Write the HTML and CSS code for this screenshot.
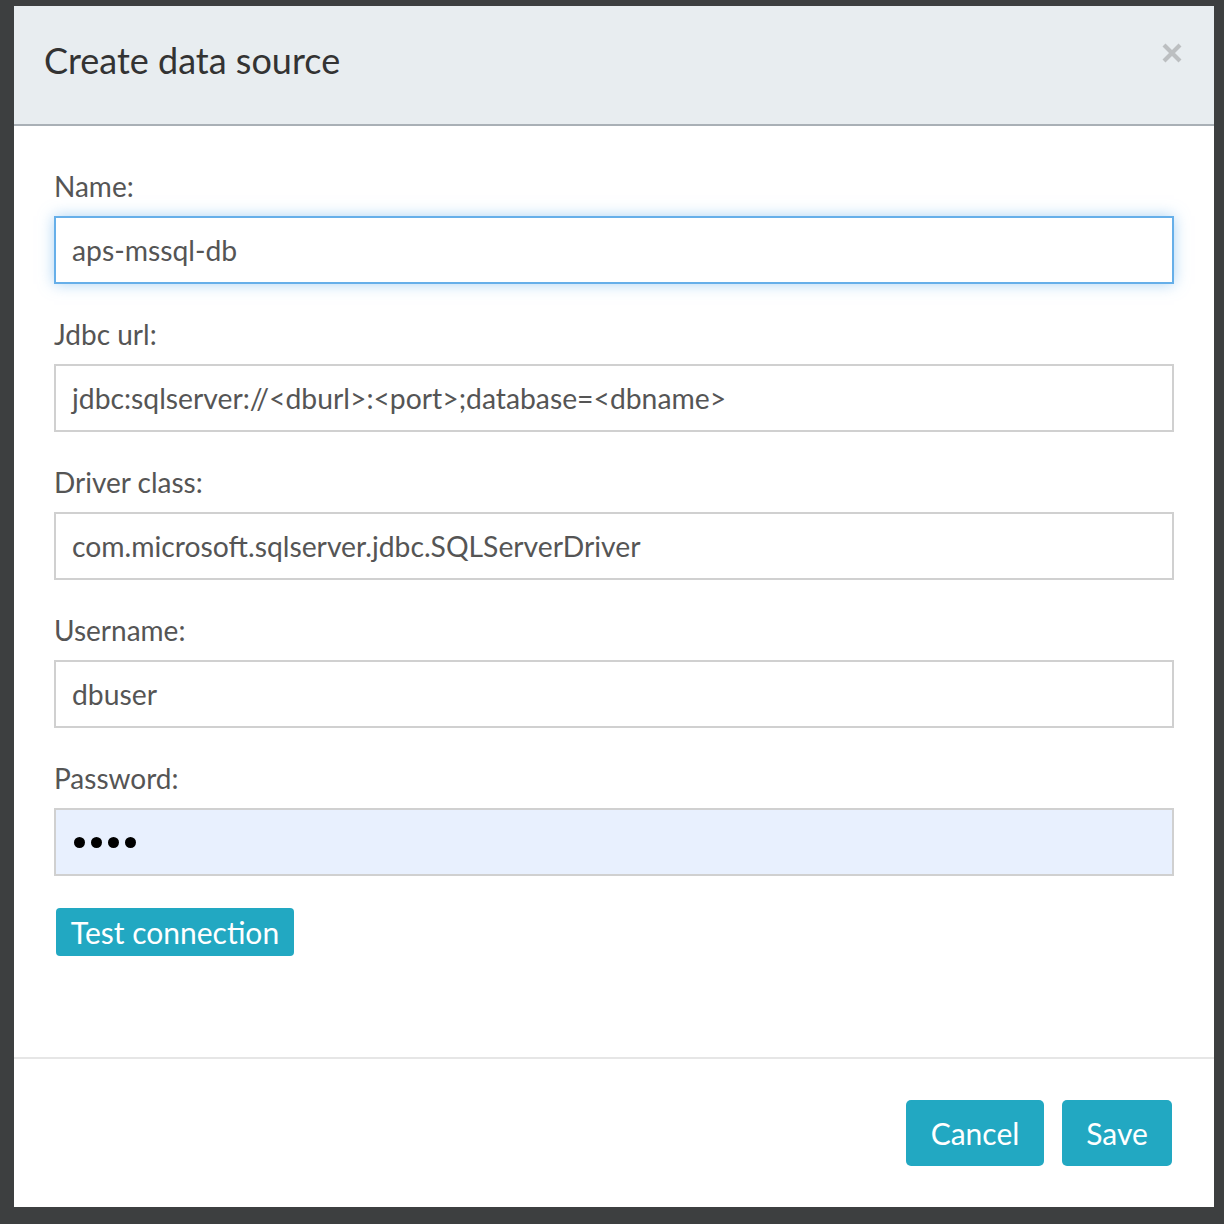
FILE: index.html
```html
<!DOCTYPE html>
<html>
<head>
<meta charset="utf-8">
<link rel="stylesheet" href="styles.css">
</head>
<body>
<div class="modal">
  <div class="modal-header">
    <h4 class="title">Create data source</h4>
    <button class="close" aria-label="Close">
      <svg width="22" height="22" viewBox="0 0 22 22"><path d="M3 3 L19 19 M19 3 L3 19" stroke="#bcbfc1" stroke-width="4.2" stroke-linecap="butt"/></svg>
    </button>
  </div>
  <div class="modal-body">
    <div class="group">
      <label class="label">Name:</label>
      <div class="input focused">aps-mssql-db</div>
    </div>
    <div class="group">
      <label class="label">Jdbc url:</label>
      <div class="input">jdbc:sqlserver://&lt;dburl&gt;:&lt;port&gt;;database=&lt;dbname&gt;</div>
    </div>
    <div class="group">
      <label class="label">Driver class:</label>
      <div class="input">com.microsoft.sqlserver.jdbc.SQLServerDriver</div>
    </div>
    <div class="group">
      <label class="label">Username:</label>
      <div class="input">dbuser</div>
    </div>
    <div class="group">
      <label class="label">Password:</label>
      <div class="input password"><span class="dots"><i></i><i></i><i></i><i></i></span></div>
    </div>
    <button class="btn btn-small">Test connection</button>
  </div>
  <div class="modal-footer">
    <button class="btn btn-large cancel">Cancel</button>
    <button class="btn btn-large save">Save</button>
  </div>
</div>
</body>
</html>
```

FILE: styles.css
```css
html, body {
  margin: 0;
  padding: 0;
}
body {
  background: #3d3f40;
  width: 1224px;
  height: 1224px;
  overflow: hidden;
  font-family: Lato, "Open Sans", sans-serif;
}
.modal {
  margin: 6px 0 0 14px;
  width: 1200px;
  height: 1201px;
  background: #fff;
  display: flex;
  flex-direction: column;
}
.modal-header {
  height: 118px;
  background: #e8edf0;
  border-bottom: 2px solid #a9b0b6;
  display: flex;
  align-items: center;
  justify-content: space-between;
  padding: 0 31px 0 31px;
  box-sizing: content-box;
}
.title {
  margin: 0 0 0 -1px;
  font-size: 36px;
  font-weight: 400;
  color: #333;
  line-height: 1;
  padding-bottom: 10px;
}
.close {
  background: none;
  border: 0;
  padding: 0;
  margin-top: -24px;
  display: flex;
}
.modal-body {
  flex: 1;
  padding: 42px 40px 0 40px;
}
.group {
  margin-bottom: 32px;
}
.label {
  display: block;
  font-size: 28px;
  line-height: 36px;
  color: #555;
  margin-bottom: 12px;
}
.input {
  box-sizing: border-box;
  height: 68px;
  border: 2px solid #d0d0d0;
  padding: 0 16px;
  display: flex;
  align-items: center;
  font-size: 28.3px;
  color: #555;
  background: #fff;
}
.input.focused {
  border-color: #66afe9;
  box-shadow: 0 0 14px rgba(102, 175, 233, 0.55);
}
.input.password {
  background: #e8f0fe;
}
.dots {
  display: flex;
  gap: 6px;
  padding-left: 2px;
}
.dots i {
  display: block;
  width: 11px;
  height: 11px;
  border-radius: 50%;
  background: #000;
}
.btn {
  font-family: Lato, "Open Sans", sans-serif;
  background: #22a8c2;
  color: #fff;
  border: 0;
  border-radius: 4px;
  cursor: pointer;
  padding: 0;
}
.btn-small {
  margin-left: 2px;
  height: 48px;
  width: 238px;
  font-size: 30px;
  line-height: 46px;
}
.modal-footer {
  border-top: 2px solid #e6e6e6;
  padding: 41px 42px 41px 0;
  display: flex;
  justify-content: flex-end;
  gap: 18px;
}
.btn-large {
  height: 66px;
  font-size: 30px;
  border-radius: 5px;
  line-height: 64px;
}
.cancel {
  width: 138px;
}
.save {
  width: 110px;
}
```
